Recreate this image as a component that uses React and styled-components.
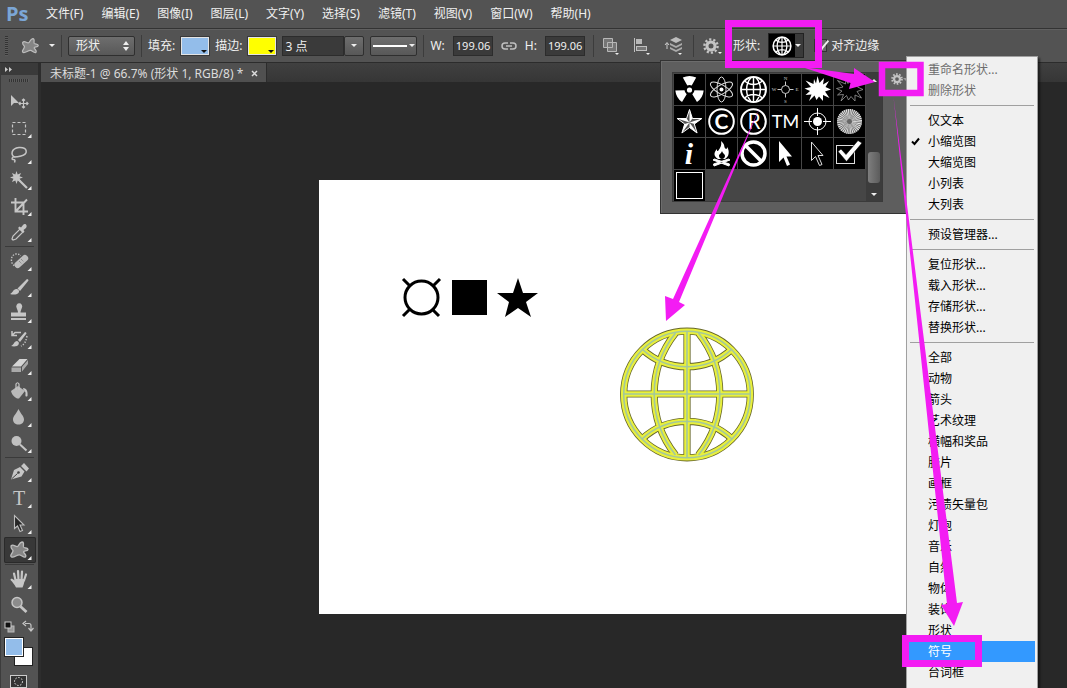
import React from "react";
import styled, { createGlobalStyle, css } from "styled-components";

const GlobalStyle = createGlobalStyle`
  * { box-sizing: border-box; }
  body { margin: 0; background: #282828; }
  button, input, select { font: inherit; color: inherit; margin: 0; padding: 0; border: 0; background: none; border-radius: 0; }
  svg { display: block; }
`;

const App_ = styled.div`
  position: relative;
  display: flex;
  flex-direction: column;
  height: 100vh;
  overflow: hidden;
  background: #282828;
  color: #f0f0f0;
  font: 12px/16px "Noto Sans", "Noto Sans CJK SC", sans-serif;
`;

/* ---------- menu bar ---------- */
const MenuBar = styled.nav`
  display: flex;
  align-items: center;
  flex: none;
  height: 28px;
  gap: 18px;
  padding-left: 6px;
  background: #535353;
  white-space: nowrap;
`;
const Logo = styled.div`
  width: 22px;
  color: #7ba6d6;
  font: 700 20px/24px "Open Sans", sans-serif;
`;
const MenuButton = styled.button`
  font-size: 12px;
  line-height: 16px;
`;

/* ---------- options bar ---------- */
const OptionsBar = styled.div`
  display: flex;
  align-items: center;
  flex: none;
  height: 35px;
  padding-left: 5px;
  border-top: 1px solid #333;
  border-bottom: 1px solid #2c2c2c;
  box-shadow: inset 0 1px #606060;
  background: #535353;
  white-space: nowrap;
`;
const Grip = styled.div`
  width: 3px;
  height: 20px;
  background: repeating-linear-gradient(#333 0 1px, #5c5c5c 1px 2px);
`;
const Group = styled.div`
  display: flex;
  align-items: center;
  gap: ${(p) => p.$gap || 6}px;
`;
const Divider = styled.div`
  flex: none;
  width: 1px;
  height: 22px;
  margin: 0 ${(p) => (p.$wide ? 8 : 6)}px;
  background: #3c3c3c;
`;
const PresetButton = styled.button`
  display: flex;
  align-items: center;
  justify-content: flex-end;
  gap: 8px;
  width: 47px;
`;
const Caret = styled.span`
  flex: none;
  width: 0;
  height: 0;
  border: 3px solid transparent;
  border-bottom-width: 0;
  border-top-color: ${(p) => p.$color || "#eee"};
`;
const raised = css`
  border: 1px solid #2f2f2f;
  border-radius: 2px;
  background: linear-gradient(#6e6e6e, #585858);
`;
const ModeWrap = styled.div`
  display: flex;
  align-items: center;
  width: 67px;
  height: 20px;
  padding-right: 4px;
  ${raised}
`;
const ModeSelect = styled.select`
  flex: 1;
  min-width: 0;
  padding-left: 7px;
  appearance: none;
  outline: 0;
`;
const Swatch = styled.button`
  display: flex;
  align-items: flex-end;
  justify-content: flex-end;
  width: 28px;
  height: 18px;
  padding: 1px;
  border: 1px solid #e4e4e4;
  outline: 1px solid #3a3a3a;
  background: ${(p) => p.$color};
`;
const Field = styled.input`
  width: ${(p) => p.$w}px;
  height: 20px;
  padding-left: 2px;
  border: 1px solid #2c2c2c;
  background: #3a3a3a;
  outline: 0;
`;
const NumberField = styled(Field)`
  font-size: 11px;
`;
const Combo = styled.div`
  display: flex;
`;
const SmallButton = styled.button`
  display: flex;
  align-items: center;
  justify-content: center;
  gap: 2px;
  width: ${(p) => p.$w}px;
  height: 20px;
  ${raised}
`;
const LineSample = styled.span`
  width: 34px;
  height: 2px;
  background: #fff;
`;
const IconButton = styled.button`
  width: 21px;
  height: 20px;
`;
const ShapePicker = styled.button`
  display: flex;
  align-items: center;
  width: 36px;
  height: 25px;
  border: 1px solid #222;
  background: linear-gradient(90deg, #000 26px, #3a3a3a 26px);
`;
const PickerThumb = styled.span`
  width: 26px;
  padding: 2px;
`;
const Tick = styled.input`
  position: relative;
  appearance: none;
  width: 13px;
  height: 13px;
  border: 1px solid #333;
  background: #6a6a6a;
  &:checked::after {
    content: "";
    position: absolute;
    left: 5px;
    top: -2px;
    width: 4px;
    height: 10px;
    border: solid #eee;
    border-width: 0 2px 2px 0;
    transform: rotate(40deg);
  }
`;

/* ---------- body ---------- */
const Body = styled.div`
  display: flex;
  flex: 1;
  min-height: 0;
`;
const ToolPanel = styled.aside`
  display: flex;
  flex-direction: column;
  flex: none;
  width: 41px;
  border-left: 1px solid #3c3c3c;
  border-right: 3px solid #2d2d2d;
  background: #535353;
`;
const PanelHeader = styled.button`
  flex: none;
  height: 12px;
  padding-left: 4px;
  background: #3a3a3a;
`;
const ToolGrip = styled.div`
  flex: none;
  width: 20px;
  height: 3px;
  margin: 4px 8px 7px;
  background: repeating-linear-gradient(90deg, #333 0 1px, #5c5c5c 1px 2px);
`;
const Tool = styled.button`
  flex: none;
  height: 26px;
  width: 32px;
  margin-left: 3px;
  padding: 1px 0 1px 3px;
  border-radius: 2px;
  ${(p) =>
    p.$active &&
    css`
      background: #383838;
      box-shadow: inset 0 0 0 1px #2a2a2a;
    `}
`;
const ToolRule = styled.div`
  flex: none;
  height: 1px;
  margin: 1px 4px;
  background: #3a3a3a;
`;
const ColorArea = styled.div`
  flex: none;
  margin: 2px 0 0 3px;
`;
const Workspace = styled.main`
  display: flex;
  flex-direction: column;
  flex: 1;
  min-width: 0;
`;
const TabBar = styled.div`
  display: flex;
  flex: none;
  height: 19px;
  background: linear-gradient(#404040, #363636);
`;
const Tab = styled.div`
  display: flex;
  align-items: center;
  gap: 8px;
  padding: 2px 8px 0 9px;
  border-right: 1px solid #2c2c2c;
  background: #505050;
  color: #dcdcdc;
  white-space: nowrap;
`;
const CanvasArea = styled.div`
  display: flex;
  flex: 1;
  min-height: 0;
  padding: 98px 48px 74px 278px;
  background: #282828;
`;
const Page = styled.div`
  flex: 1;
  min-width: 0;
  overflow: hidden;
  background: #fff;
`;

/* ---------- shape picker pop-up ---------- */
const Popup = styled.section`
  position: absolute;
  left: 660px;
  top: 60px;
  display: flex;
  align-items: flex-start;
  gap: 8px;
  padding: 11px 10px 11px 11px;
  border: 1px solid #333;
  box-shadow: inset 1px 1px #6c6c6c;
  background: #5e5e5e;
`;
const ShapeList = styled.div`
  display: flex;
  border: 1px solid #3a3a3a;
  background: #464646;
`;
const ShapeGrid = styled.div`
  display: grid;
  grid-template-columns: repeat(6, 31px);
  grid-auto-rows: 31px;
  gap: 1px;
  padding: 1px 1px 0;
`;
const Shape = styled.button`
  background: #000;
`;
const Scroll = styled.div`
  display: flex;
  flex-direction: column;
  align-items: center;
  width: 16px;
  padding: 6px 0 5px;
  background: #3c3c3c;
`;
const Thumb = styled.div`
  width: 12px;
  height: 31px;
  margin: auto 0 10px;
  border-radius: 3px;
  background: linear-gradient(90deg, #7e7e7e, #5c5c5c);
`;
const UpCaret = styled(Caret)`
  transform: rotate(180deg);
`;
const GearButton = styled.button`
  display: flex;
  align-items: center;
  width: 22px;
  height: 14px;
`;

/* ---------- flyout menu ---------- */
const Flyout = styled.div`
  position: absolute;
  left: 906px;
  top: 56px;
  bottom: -24px;
  width: 132px;
  padding: 2px;
  border: 1px solid #a0a0a0;
  background: #f0f0f0;
  box-shadow: 2px 2px 2px rgba(0, 0, 0, 0.5);
`;
const FlyoutItem = styled.button`
  display: flex;
  align-items: center;
  width: 100%;
  height: 21px;
  white-space: nowrap;
  color: ${(p) => (p.$active ? "#fff" : "#000")};
  background: ${(p) => (p.$active ? "#3399ff" : "transparent")};
  &:disabled { color: #6d6d6d; }
`;
const CheckSlot = styled.span`
  width: 19px;
  padding-left: 2px;
`;
const FlyoutRule = styled.div`
  height: 1px;
  margin: 4px 1px;
  background: #a0a0a0;
`;

const Annotations = styled.svg`
  position: absolute;
  left: 0;
  top: 0;
  pointer-events: none;
`;

/* ---------- drawings ---------- */
const starPoints = (cx, cy, n, R, r, start = -90) =>
  Array.from({ length: n * 2 }, (_, i) => {
    const a = ((start + (i * 180) / n) * Math.PI) / 180;
    const d = i % 2 ? r : R;
    return `${(cx + d * Math.cos(a)).toFixed(1)},${(cy + d * Math.sin(a)).toFixed(1)}`;
  });

const GlobeLines = ({ w = 1.4 }) => (
  <g fill="none" stroke="#fff" strokeWidth={w}>
    <circle cx="15.5" cy="15.5" r="12.5" strokeWidth={w + 0.5} />
    <path d="M15.5 3v25M3 15.5h25M13 3.5A18.5 18.5 0 0 0 13 27.5M18 3.5A18.5 18.5 0 0 1 18 27.5M6.7 7A13 13 0 0 0 24.3 7M6.7 24A13 13 0 0 1 24.3 24" />
  </g>
);

const Gear = ({ size = 14 }) => (
  <svg width={size} height={size} viewBox="0 0 16 16">
    <circle cx="8" cy="8" r="4" fill="none" stroke="#c4c4c4" strokeWidth="3" />
    <circle cx="8" cy="8" r="6.6" fill="none" stroke="#c4c4c4" strokeWidth="2.4" strokeDasharray="2.2 1.95" />
  </svg>
);

const Blob = () => (
  <path
    d="M4.500 19C2 17.500 6.500 14.500 6 12.500C5.500 11.500 3.500 10.500 4 8C6 5.500 8.500 9 10.500 8.500C12 8 12 4.500 15 4C17.500 4 16 7.500 16.500 9C17.500 10.500 21 9.500 21 11.500C20.500 13.500 17 12.500 16.500 14C17 15.500 20 17 18.500 19C16.500 20 14.500 17 12.500 16.800C10 16.500 7 20 4.500 19Z"
    fill="#858585"
    stroke="#bdbdbd"
    strokeWidth="1.300"
  />
);

const BURST = "15.5,2 17.5,9 22,4 21,10.500 27,7 23.500,13 29,15.500 23,17.500 27.500,24 21,21 21,27 17,22.500 14.500,26 12.500,21.500 7,27 9.500,20.500 3.500,21 8,17 2.500,14.500 9,13 3.500,6.500 11.500,10 12,5 14,9.500";

const facets = (() => {
  const p = starPoints(15.5, 16.5, 5, 13, 5);
  return [0, 2, 4, 6, 8].map((i) => `15.5,16.5 ${p[i]} ${p[i + 1]}`);
})();

const shapes = [
  ["辐射", <g fill="#fff"><circle cx="15.5" cy="16" r="2.600" />{[0, 120, 240].map((a) => <path key={a} transform={`rotate(${a} 15.5 16)`} d="M13.300 11.500L8.800 3.500Q15.500 .5 22.200 3.500L17.700 11.500Q15.500 10.500 13.300 11.500Z" />)}</g>],
  ["原子", <g fill="none" stroke="#ddd">{[0, 60, 120].map((a) => <ellipse key={a} cx="15.5" cy="15.5" rx="4.500" ry="12.500" transform={`rotate(${a} 15.5 15.5)`} />)}<circle cx="15.5" cy="15.5" r="2" fill="#fff" stroke="none" /></g>],
  ["地球", <GlobeLines />],
  ["罗盘", <g fill="none" stroke="#ccc"><circle cx="15.5" cy="15.5" r="4" /><path d="M15.500 7.500v4M15.500 19.500v4M7.500 15.500h4M19.500 15.500h4" /><g fill="#ccc" stroke="none" fontSize="5" fontFamily="Liberation Serif, serif" textAnchor="middle"><text x="15.5" y="6">N</text><text x="15.5" y="29">S</text><text x="4" y="17">W</text><text x="27" y="17">E</text></g></g>],
  ["爆炸 1", <polygon points={BURST} fill="#fff" />],
  ["爆炸 2", <polygon points={BURST} fill="none" stroke="#999" strokeWidth=".8" />],
  ["五角星", <g><polygon points={starPoints(15.5, 16.5, 5, 13, 5).join(" ")} fill="#555" stroke="#fff" />{facets.map((f) => <polygon key={f} points={f} fill="#fff" />)}</g>],
  ["版权", <g><circle cx="15.5" cy="15.5" r="12.300" fill="none" stroke="#fff" strokeWidth="2" /><text x="15.5" y="23" textAnchor="middle" fill="#fff" fontSize="21" fontWeight="700" fontFamily="Lato, sans-serif">C</text></g>],
  ["注册商标", <g><circle cx="15.5" cy="15.5" r="12.300" fill="none" stroke="#fff" strokeWidth="2" /><text x="16" y="23" textAnchor="middle" fill="#fff" fontSize="21" fontFamily="Noto Sans, sans-serif">R</text></g>],
  ["商标", <text x="15.5" y="22" textAnchor="middle" fill="#fff" fontSize="18" fontFamily="Lato, sans-serif">TM</text>],
  ["靶心", <g fill="none" stroke="#fff"><circle cx="15.500" cy="15.500" r="8.500" /><circle cx="15.500" cy="15.500" r="4.500" fill="#fff" stroke="none" /><path d="M15.500 2v8M15.500 21v8M2 15.500h8M21 15.500h8" /></g>],
  ["放射", <g><circle cx="15.5" cy="15.5" r="12.500" fill="#666" /><circle cx="15.5" cy="15.5" r="7.500" fill="none" stroke="#eee" strokeWidth="10" strokeDasharray=".6545 .6545" /></g>],
  ["信息", <text x="15" y="26" textAnchor="middle" fill="#fff" fontSize="30" fontWeight="700" fontStyle="italic" fontFamily="Liberation Serif, serif">i</text>],
  ["营火", <g fill="#fff"><path fillRule="evenodd" d="M15 3c5 4 2 6 5 8 1 0 1-1 1-2 3 4 2 10-2 12h-7c-5-3-4-7-1-10 0 2 0 2 1 2 2-3 4-5 3-10zm1 10c-1 3-3 3-3 5s2 3 3 3 3-1 3-3-2-2-3-5z" /><path d="M7 22l1.500-1 15 5-.5 2zM24 22l-1.500-1-15 5 .5 2z" stroke="#fff" /></g>],
  ["禁止", <g fill="none" stroke="#fff" strokeWidth="3.500"><circle cx="15.5" cy="15.5" r="11.500" /><path d="M7.500 7.500l16 16" /></g>],
  ["箭头 1", <path d="M9 3v21l4.500-4.500 3.500 8.500 3-1.500-3.500-8h5.500z" fill="#fff" />],
  ["箭头 2", <path d="M9.500 4v18.500l4-4 4 9 2.500-1-4-9h5z" fill="none" stroke="#ddd" />],
  ["选中标记", <g><rect x="2.500" y="7.500" width="18" height="18" fill="none" stroke="#ddd" /><path d="M4 13.500l3-2.500 5 5.500L24 2.500l4 2.500-15.500 18.500z" fill="#fff" stroke="#000" strokeWidth=".6" /></g>],
  ["方框", <rect x="2.500" y="2.500" width="26" height="26" fill="none" stroke="#fff" strokeWidth="1" />],
];

const S = { fill: "none", stroke: "#c6c6c6", strokeWidth: 1.5 };
const toolGroups = [
  [
    ["移动工具", <g><path d="M4 5v11l3-3h5z" fill="#c6c6c6" /><path d="M16.500 9v9M12 13.500h9M15 10.500l1.500-1.500 1.500 1.500M15 16.500l1.500 1.500 1.500-1.500M13.500 12L12 13.500l1.500 1.500M19.500 12l1.500 1.500-1.500 1.500" {...S} strokeWidth="1.200" /></g>, 1],
    ["选框工具", <rect x="5.500" y="6.500" width="13" height="12" {...S} strokeWidth="1.200" strokeDasharray="3 2" />],
    ["套索工具", <path d="M8.500 15.500C3 13 4 6.500 12 5.500c9-.5 9.500 6.500 2 8.500-3 1-6.500 1-8 1-1.500 1-1 3 .5 2.500 2 0 1.500 1.500 1 3" {...S} />],
    ["魔棒工具", <g><polygon points={starPoints(9.5, 9.5, 8, 6.5, 3.2).join(" ")} fill="#c6c6c6" /><path d="M11 11l9 9" {...S} strokeWidth="2.200" /></g>],
    ["裁剪工具", <path d="M8.500 4v13.500H21M4 8.500h12.500V21M9 17l11-11.500" {...S} strokeWidth="1.900" />],
    ["吸管工具", <g><path d="M5 19l1-3 7-7 3 3-7 7-3 1z" {...S} strokeWidth="1.200" /><path d="M11 8l1.500-1.500 1.500 1L16 5c2-2.500 5 .5 3 3l-2.500 2 1 1.500L16 13z" fill="#c6c6c6" /></g>],
  ],
  [
    ["污点修复画笔工具", <g><path d="M10 17.500C3 17 2.500 6 9 5q3-.5 4.500 2" {...S} strokeWidth="1.400" strokeDasharray="1.400 1.400" /><rect x="6" y="9" width="16" height="6.500" rx="3" fill="#bdbdbd" transform="rotate(-42 14.5 12)" /><path d="M12 12l3 3M14 10l3 3" stroke="#777" strokeDasharray="1 1" /></g>],
    ["画笔工具", <g><path d="M10.500 13.500L20 4q1.500 0 1.500 1.500L13 16z" fill="#c6c6c6" /><path d="M3 19c3-1 3-5.500 7-5 3 1 2.500 4 0 5-2 .7-4.500.7-7 0z" fill="#c6c6c6" /></g>],
    ["仿制图章工具", <path d="M9.500 6.500a3 3 0 1 1 5.500 0c-.5 2-1.500 3-1.500 5h5.500v4H4v-4h7c0-2-1-3-1.500-5zM4 17h15v2H4z" fill="#c6c6c6" />],
    ["历史记录画笔工具", <g><path d="M11 13L18 5q1.500 0 1.500 1.500L13 15zM4 19c3-1 3-5 6-5 3 1 2 4 0 5-2 .5-4 .5-6 0z" fill="#c6c6c6" /><path d="M14 5.500H8L5.500 8M5 4v4.500h5" {...S} /><path d="M20 9c-1 5-2 8-6 10" {...S} strokeDasharray="1.300 1.600" /></g>],
    ["橡皮擦工具", <g><path d="M5 13.500L12.500 6h8L14 13.500z" fill="#d4d4d4" /><path d="M4.500 14.500h9.500v4.500H4.500zM15 14L21 7v4l-6 7.500z" fill="#a9a9a9" /></g>],
    ["油漆桶工具", <g><path d="M4 12l7-5 7 5-6 7.500c-3 .5-7-3-8-7.500z" fill="#b9b9b9" /><path d="M9 11V5q1.500-2.500 3 0v6" {...S} strokeWidth="1.200" /><path d="M16 9c4 0 5 4 4.500 8-1.500 1.500-2.500 0-2-2 .3-2-.5-3-2-4z" fill="#c6c6c6" /></g>],
    ["模糊工具", <path d="M11.500 4c2 4.500 5.500 7 5.500 10.500 0 3-2.500 5-5.500 5S6 17.500 6 14.500C6 11 9.500 8.500 11.500 4z" fill="#bcbcbc" />],
    ["减淡工具", <g><circle cx="9.500" cy="10" r="5" fill="#c0c0c0" /><path d="M13 13.500l6.500 6" {...S} strokeWidth="2" /></g>],
  ],
  [
    ["钢笔工具", <g><path d="M4 19.500L7 10l6-3 4.500 4.500-3 5zM14 6l3-3 5 5.500-2.500 3z" fill="#c6c6c6" /><path d="M4.500 19l6-5.500" stroke="#444" /><circle cx="11.500" cy="12.500" r="1.300" fill="#444" /></g>],
    ["横排文字工具", <text x="12" y="18.500" textAnchor="middle" fill="#c6c6c6" fontSize="20" fontFamily="Liberation Serif, serif">T</text>],
    ["路径选择工具", <path d="M7.500 3.500v13l3-2.500 2.500 5.500 2.500-1-2.500-5.500h4z" fill="#262626" stroke="#bdbdbd" strokeWidth="1.100" />],
    ["自定形状工具", <Blob />, 0, 1],
  ],
  [
    ["抓手工具", <g><path d="M8 12h9.500c0 4-1 6-2 8.500H9C7.500 17.500 5.500 15 3.500 13c0-2 2-1.500 4 .5z" fill="#c6c6c6" /><path d="M8.500 13L7 6.500M11.500 13l-.5-9M14.500 13l.5-8.500M17 13.500l2-6" stroke="#c6c6c6" strokeWidth="2.200" strokeLinecap="round" /></g>],
    ["缩放工具", <g><circle cx="10" cy="9.500" r="5" fill="#8c8c8c" stroke="#c6c6c6" strokeWidth="1.500" /><path d="M13.500 13.500l6 5.500" {...S} strokeWidth="2.800" /></g>, 1],
  ],
];

const Document = () => (
  <svg width="708" height="434" viewBox="0 0 708 434" aria-label="画布">
    <circle cx="102.500" cy="117.500" r="16.500" fill="none" stroke="#000" strokeWidth="3" />
    <path d="M84 99l7 7M121 99l-7 7M84 136l7-7M120 136l-7-7" stroke="#000" strokeWidth="3" />
    <rect x="133" y="100" width="35" height="35" />
    <path d="M199 98l5 15h15l-12 9 5 15-13-9-13 9 4-15-12-9h16z" />
    <g fill="none">
      {[["#66662a", 7.2], ["#e9f03c", 5.6], ["#a3c89c", 1.6]].map(([c, w]) => (
        <g key={c} stroke={c} strokeWidth={w}>
          <path d="M368 152V277M305 214H431M356.500 153A98 98 0 0 0 356.500 275M379.500 153A98 98 0 0 1 379.500 275M323 169A66 66 0 0 0 413 169M323 259A66 66 0 0 1 413 259" />
          <circle cx="368" cy="214.500" r="63.300" />
        </g>
      ))}
    </g>
  </svg>
);

const menus = ["文件(F)", "编辑(E)", "图像(I)", "图层(L)", "文字(Y)", "选择(S)", "滤镜(T)", "视图(V)", "窗口(W)", "帮助(H)"];

const flyout = [
  ["重命名形状...", "删除形状"],
  ["仅文本", "小缩览图", "大缩览图", "小列表", "大列表"],
  ["预设管理器..."],
  ["复位形状...", "载入形状...", "存储形状...", "替换形状..."],
  ["全部", "动物", "箭头", "艺术纹理", "横幅和奖品", "胶片", "画框", "污渍矢量包", "灯泡", "音乐", "自然", "物体", "装饰", "形状", "符号", "台词框"],
];

export default function App() {
  return (
    <App_>
      <GlobalStyle />
      <MenuBar>
        <Logo>Ps</Logo>
        {menus.map((m) => <MenuButton key={m}>{m}</MenuButton>)}
      </MenuBar>

      <OptionsBar>
        <Grip />
        <PresetButton aria-label="工具预设">
          <svg width="22" height="22" viewBox="0 0 24 24"><Blob /></svg>
          <Caret />
        </PresetButton>
        <Divider />
        <ModeWrap>
          <ModeSelect aria-label="工具模式"><option>形状</option></ModeSelect>
          <svg width="8" height="12" viewBox="0 0 8 12"><path d="M4 1l3 4H1zM4 11l3-4H1z" fill="#eee" /></svg>
        </ModeWrap>
        <Divider />
        <Group>
          <label htmlFor="fill">填充:</label>
          <Swatch id="fill" $color="#93bdea"><Caret $color="#111" /></Swatch>
          <label htmlFor="stroke">描边:</label>
          <Swatch id="stroke" $color="#ffff00"><Caret $color="#111" /></Swatch>
          <Combo>
            <Field $w={62} aria-label="描边宽度" defaultValue="3 点" />
            <SmallButton $w={20} aria-label="描边宽度选项"><Caret /></SmallButton>
          </Combo>
          <SmallButton $w={47} aria-label="描边类型"><LineSample /><Caret /></SmallButton>
        </Group>
        <Divider />
        <Group $gap={8}>
          <label htmlFor="w">W:</label>
          <NumberField id="w" $w={40} defaultValue="199.06" />
          <svg width="16" height="10" viewBox="0 0 16 10"><path d="M7 2H4a3 3 0 0 0 0 6h3M9 2h3a3 3 0 0 1 0 6H9M5 5h6" fill="none" stroke="#c0c0c0" strokeWidth="1.500" /></svg>
          <label htmlFor="h">H:</label>
          <NumberField id="h" $w={40} defaultValue="199.06" />
        </Group>
        <Divider $wide />
        <Group $gap={10}>
          <IconButton aria-label="路径操作">
            <svg width="21" height="20" viewBox="0 0 21 20"><path d="M1.500 2.500h9v9h-9zM5.500 6.500h9v9h-9z" fill="#999" fillOpacity=".5" stroke="#b8b8b8" /><path d="M13 17h4l-2 2z" fill="#eee" /></svg>
          </IconButton>
          <IconButton aria-label="路径对齐方式">
            <svg width="21" height="20" viewBox="0 0 21 20"><path d="M1.500 2v14" stroke="#c0c0c0" /><rect x="3" y="3" width="6" height="5" fill="#b8b8b8" /><rect x="3.500" y="10.500" width="10" height="4" fill="#777" stroke="#c0c0c0" /><path d="M13 17h4l-2 2z" fill="#eee" /></svg>
          </IconButton>
          <IconButton aria-label="路径排列方式">
            <svg width="21" height="20" viewBox="0 0 21 20"><path d="M3 13V7M1 9l2-2.500L5 9" fill="none" stroke="#ccc" /><path d="M12 1l6 3-6 3-6-3z" fill="#bdbdbd" /><path d="M6 7l6 3 6-3v2l-6 3-6-3zM6 11l6 3 6-3v2l-6 3-6-3z" fill="#ababab" /><path d="M14 17h4l-2 2z" fill="#eee" /></svg>
          </IconButton>
        </Group>
        <Divider $wide />
        <Group $gap={10}>
          <IconButton aria-label="选项"><svg width="21" height="20" viewBox="0 0 21 20"><g transform="translate(1 2)"><Gear size={16} /></g><path d="M16 16h4l-2 2z" fill="#eee" /></svg></IconButton>
          <Group $gap={8}>
            <label htmlFor="shape">形状:</label>
            <ShapePicker id="shape">
              <PickerThumb><svg width="22" height="22" viewBox="0 0 31 31"><GlobeLines w={1.7} /></svg></PickerThumb>
              <Caret />
            </ShapePicker>
          </Group>
          <Group $gap={4}>
            <Tick type="checkbox" id="edges" defaultChecked />
            <label htmlFor="edges">对齐边缘</label>
          </Group>
        </Group>
      </OptionsBar>

      <Body>
        <ToolPanel>
          <PanelHeader aria-label="展开面板">
            <svg width="9" height="7" viewBox="0 0 9 7"><path d="M0 1l3 2.500L0 6zM4 1l3 2.500L4 6z" fill="#ccc" /></svg>
          </PanelHeader>
          <ToolGrip />
          {toolGroups.map((g, gi) => (
            <React.Fragment key={gi}>
              {gi > 0 && <ToolRule />}
              {g.map(([name, icon, plain, active]) => (
                <Tool key={name} aria-label={name} $active={active}>
                  <svg width="26" height="24" viewBox="0 0 26 24">
                    {icon}
                    {!plain && <path d="M24.500 18v4h-4z" fill="#eee" />}
                  </svg>
                </Tool>
              ))}
            </React.Fragment>
          ))}
          <ColorArea>
            <svg width="32" height="70" viewBox="0 0 32 70" aria-label="前景色和背景色">
              <rect x="4" y="6" width="6" height="6" fill="#999" stroke="#bbb" />
              <rect x="1" y="2" width="6" height="6" fill="#111" stroke="#ccc" />
              <path d="M21 3.500h4q2 0 2 2v4M22 1l-3 2.500L22 6M24.500 8l2.500 3 2.500-3" fill="none" stroke="#c6c6c6" strokeWidth="1.200" />
              <rect x="10.500" y="27.500" width="18" height="18" fill="#fff" stroke="#222" />
              <rect x="0" y="17" width="20" height="20" fill="#222" />
              <rect x="1.500" y="18.500" width="17" height="17" fill="#93bdea" stroke="#fff" />
              <rect x="6.500" y="55.500" width="16" height="12" fill="#333" stroke="#ccc" />
              <circle cx="14.500" cy="61.500" r="4" fill="none" stroke="#eee" strokeDasharray="1.500 1.500" />
            </svg>
          </ColorArea>
        </ToolPanel>

        <Workspace>
          <TabBar>
            <Tab>
              <span>未标题-1 @ 66.7% (形状 1, RGB/8) *</span>
              <button aria-label="关闭"><svg width="7" height="7" viewBox="0 0 7 7"><path d="M1 1l5 5M6 1L1 6" stroke="#ddd" strokeWidth="1.500" /></svg></button>
            </Tab>
          </TabBar>
          <CanvasArea>
            <Page><Document /></Page>
          </CanvasArea>
        </Workspace>
      </Body>

      <Popup>
        <ShapeList>
          <ShapeGrid>
            {shapes.map(([name, art]) => (
              <Shape key={name} aria-label={name}><svg width="31" height="31" viewBox="0 0 31 31">{art}</svg></Shape>
            ))}
          </ShapeGrid>
          <Scroll><UpCaret /><Thumb /><Caret /></Scroll>
        </ShapeList>
        <GearButton aria-label="形状菜单"><Gear size={12} /><Caret $color="#999" /></GearButton>
      </Popup>

      <Flyout>
        {flyout.map((group, gi) => (
          <React.Fragment key={gi}>
            {gi > 0 && <FlyoutRule />}
            {group.map((t) => (
              <FlyoutItem key={t} disabled={gi === 0} $active={t === "符号"}>
                <CheckSlot>
                  {t === "小缩览图" && <svg width="9" height="9" viewBox="0 0 9 9"><path d="M1 4.500l2.500 2.500L8 1.500" fill="none" stroke="#000" strokeWidth="2" /></svg>}
                </CheckSlot>
                {t}
              </FlyoutItem>
            ))}
          </React.Fragment>
        ))}
      </Flyout>

      <Annotations width="1067" height="688" viewBox="0 0 1067 688">
        <g fill="none" stroke="#f31cf3" strokeWidth="7">
          <rect x="728.5" y="23.5" width="90" height="41" />
          <rect x="882" y="65" width="38.500" height="28" strokeWidth="6.500" />
          <rect x="905.500" y="638.500" width="73" height="25" />
        </g>
        <g fill="#f31cf3">
          <path d="M802 67L854 74V68L875 82L849 89L850.500 83Z" />
          <path d="M760 107L679 302L685 305L666 321L665 296L673 299Z" />
          <path d="M893.500 97L957 603L963 602L954 626L941 605L947 604Z" />
        </g>
      </Annotations>
    </App_>
  );
}
